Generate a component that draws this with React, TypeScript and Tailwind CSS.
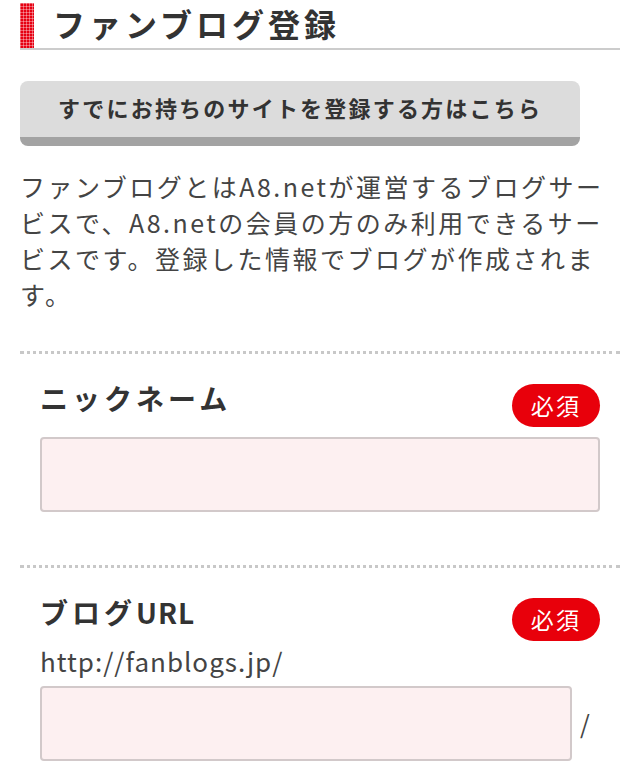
import React from "react";

interface FieldProps {
  label: React.ReactNode;
  children?: React.ReactNode;
}

function RequiredBadge() {
  return (
    <span className="mt-[2px] flex h-[43px] w-[88px] items-center justify-center rounded-full bg-[#e8000b] text-[23px] tracking-widest text-white">
      必須
    </span>
  );
}

function Field({ label, children }: FieldProps) {
  return (
    <div className="border-t-[3px] border-dotted border-[#c8c8c8] px-5 pt-7">
      <div className="flex items-start justify-between">
        <label className="text-[28px] font-bold leading-[32px] tracking-[4px] text-[#333]">
          {label}
        </label>
        <RequiredBadge />
      </div>
      {children}
    </div>
  );
}

function TextBox({ className = "" }: { className?: string }) {
  return (
    <input
      type="text"
      className={`h-[75px] rounded-[4px] border-2 border-[#d2c9ca] bg-[#fdf0f1] px-3 text-[24px] outline-none ${className}`}
    />
  );
}

export default function App() {
  return (
    <div className="min-h-screen bg-white px-5 pb-10 font-['Noto_Sans_CJK_JP','Noto_Sans',sans-serif] text-[#333]">
      {/* Page title */}
      <div className="flex h-[50px] border-b-2 border-[#cccccc]">
        <span className="mt-[3px] w-[14px] bg-[#e60012] bg-[linear-gradient(90deg,rgba(255,255,255,0.35)_1px,transparent_1px),linear-gradient(rgba(255,255,255,0.35)_1px,transparent_1px)] bg-[size:3px_3px]" />
        <h1 className="ml-[19px] self-center pb-[2px] text-[32px] font-bold leading-none tracking-[4px] text-[#333]">
          ファンブログ登録
        </h1>
      </div>

      <button
        type="button"
        className="mt-[31px] flex h-[65px] w-[560px] items-center justify-center rounded-lg border-b-[9px] border-[#a3a3a3] bg-[#dcdcdc] pb-[3px] text-[22px] font-bold tracking-widest text-[#333]"
      >
        すでにお持ちのサイトを登録する方はこちら
      </button>

      <p className="mt-[22px] w-[596px] text-[25px] leading-[36px] tracking-widest text-[#444]">
        ファンブログとはA8.netが運営するブログサービスで、A8.netの会員の方のみ利用できるサービスです。登録した情報でブログが作成されます。
      </p>

      <div className="mt-[39px]">
        <Field label="ニックネーム">
          <TextBox className="mt-[10px] w-full" />
        </Field>
      </div>

      <div className="mt-[53px]">
        <Field
          label={
            <>
              ブログ<span className="tracking-[1px]">URL</span>
            </>
          }
        >
          <p className="mt-[5px] text-[26px] leading-[30px] tracking-[1px] text-[#444]">
            http://fanblogs.jp/
          </p>
          <div className="mt-[10px] flex items-center">
            <TextBox className="w-[532px]" />
            <span className="ml-[8px] text-[25px] text-[#444]">/</span>
          </div>
        </Field>
      </div>
    </div>
  );
}
